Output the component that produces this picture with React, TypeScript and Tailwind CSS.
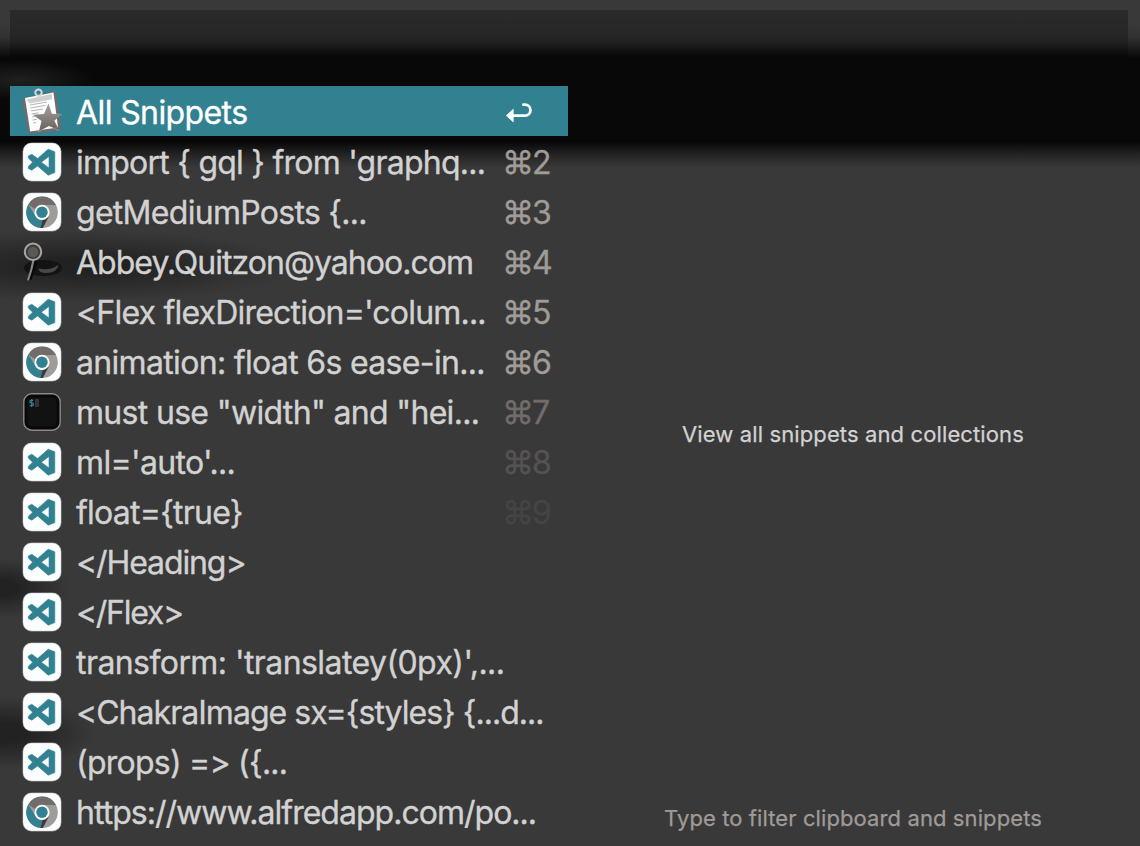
type Kind = "snippets" | "code" | "chrome" | "search" | "terminal";

type Row = { kind: Kind; text: string; cls: string; shortcut?: string; shortcutCls?: string };

const rows: Row[] = [
  { kind: "snippets", text: "All Snippets", cls: "tracking-[-0.6px] text-white" },
  { kind: "code", text: "import { gql } from 'graphq...", cls: "tracking-[-0.76px]", shortcut: "2", shortcutCls: "text-[#9f9b97]" },
  { kind: "chrome", text: "getMediumPosts {...", cls: "tracking-[-0.71px]", shortcut: "3", shortcutCls: "text-[#9f9b97]" },
  { kind: "search", text: "Abbey.Quitzon@yahoo.com", cls: "tracking-[-0.97px]", shortcut: "4", shortcutCls: "text-[#9f9b97]" },
  { kind: "code", text: "<Flex flexDirection='colum...", cls: "tracking-[-0.8px]", shortcut: "5", shortcutCls: "text-[#9f9b97]" },
  { kind: "chrome", text: "animation: float 6s ease-in...", cls: "tracking-[-0.67px]", shortcut: "6", shortcutCls: "text-[#9f9b97]" },
  { kind: "terminal", text: "must use \"width\" and \"hei...", cls: "tracking-[-0.68px]", shortcut: "7", shortcutCls: "text-[#716b69]" },
  { kind: "code", text: "ml='auto'...", cls: "tracking-[-0.65px]", shortcut: "8", shortcutCls: "text-[#555251]" },
  { kind: "code", text: "float={true}", cls: "tracking-[-0.75px]", shortcut: "9", shortcutCls: "text-[#454444]" },
  { kind: "code", text: "</Heading>", cls: "tracking-[-1.1px]" },
  { kind: "code", text: "</Flex>", cls: "tracking-[-1.3px]" },
  { kind: "code", text: "transform: 'translatey(0px)',...", cls: "tracking-[-0.57px]" },
  { kind: "code", text: "<ChakraImage sx={styles} {...d...", cls: "tracking-[-0.97px]" },
  { kind: "code", text: "(props) => ({...", cls: "tracking-[-0.76px]" },
  { kind: "chrome", text: "https://www.alfredapp.com/po...", cls: "tracking-[-0.98px]" },
];

function CodeIcon() {
  return (
    <svg viewBox="0 0 40 40" className="size-10">
      <rect x="1" y="1" width="38" height="38" rx="8.5" fill="#fbfeff" stroke="#d2d2d2" strokeWidth="0.6" />
      <path
        fillRule="evenodd"
        fill="#328190"
        stroke="#328190"
        strokeWidth="0.6"
        strokeLinejoin="round"
        d="M26.2 7.2 32.8 9.8v20.8L26.2 33.2 15.6 23.9 9.8 28.2 6.3 26.4v-2L10.6 20.2 6.3 16v-2L9.8 12.2l5.8 4.3ZM27 14.4 19.3 20.2l7.7 5.8Z"
      />
    </svg>
  );
}

function ChromeIcon() {
  return (
    <svg viewBox="0 0 40 40" className="size-10">
      <rect x="1" y="1" width="38" height="38" rx="8.5" fill="#fbfeff" stroke="#d2d2d2" strokeWidth="0.6" />
      <circle cx="20" cy="20.3" r="15.8" fill="#a09c99" />
      <path d="M6.3 12.4A15.8 15.8 0 0 1 34 13H20.3a7.4 7.4 0 0 0-6.8 4.6Z" fill="#726c6a" />
      <path d="M6.3 12.4A15.8 15.8 0 0 0 19 36L26.4 24.2a7.4 7.4 0 0 1-12.9-.3Z" fill="#328190" />
      <path d="m21 27.8-2.5 8.2 2.3.1 6-11.5Z" fill="#393939" />
      <circle cx="20" cy="20.3" r="7.6" fill="#fbfeff" />
      <circle cx="20" cy="20.3" r="5.7" fill="#328190" />
    </svg>
  );
}

function TerminalIcon() {
  return (
    <svg viewBox="0 0 40 40" className="size-10">
      <rect x="1.8" y="1.8" width="36.4" height="36.4" rx="8" fill="#080808" stroke="#8d8885" strokeWidth="1.4" />
      <rect x="5.5" y="5.5" width="29" height="29" rx="4" fill="#121212" />
      <path d="M11.3 8.3H9.2a1.2 1.2 0 0 0 0 2.7h1a1.3 1.3 0 0 1 0 2.7H7.8M9.7 7v8" stroke="#328190" strokeWidth="1.2" fill="none" />
      <rect x="13" y="7" width="4" height="8" fill="#353535" />
    </svg>
  );
}

function SearchIcon() {
  return (
    <svg viewBox="0 0 40 40" className="size-10">
      <ellipse cx="21" cy="26" rx="19" ry="8" fill="#131313" />
      <path d="M16.5 26.5q11 2.5 20-3.8-1 8-12.5 8.3-7.3 0-7.5-4.5Z" fill="#4a4847" />
      <path d="M13.5 19 10.5 28 7.5 37.5" stroke="#080808" strokeWidth="4" fill="none" />
      <path d="m11.5 18-2.3 10-3 9.5" stroke="#8c8784" strokeWidth="2.1" strokeLinecap="round" fill="none" />
      <circle cx="11" cy="9.8" r="8.2" fill="#3e3c3b" stroke="#a8a4a0" strokeWidth="2" />
      <circle cx="11" cy="10" r="5.2" fill="#5c5856" />
    </svg>
  );
}

function SnippetsIcon() {
  return (
    <svg viewBox="0 0 40 50" className="h-[50px] w-10">
      <path d="m1 12.5 30.5-7.3q2-.3 2.5 2L39 42q0 2-2 2.2L8.5 47.8q-2 0-2.4-2L.2 15Z" fill="#716b69" />
      <path d="m3 12 28.5-5.6L36 41.5 8.2 45.5Z" fill="#fbfeff" />
      <path d="M4.5 13.5 29.5 8l.8 5.2L7.5 17.5Z" fill="#cfcfcf" />
      <circle cx="16.5" cy="6.6" r="3.2" fill="none" stroke="#d7d7d7" strokeWidth="2" />
      <path
        d="m8 19 17-3M8.4 22l15-2.6M9 25l12-2M9.5 28l7-1.2M10 31l5-.8M10.5 34l4.5-.7M11 37l3-.5"
        stroke="#b7b5b3"
        strokeWidth="1"
      />
      <path d="m26.5 17.5 3 9.8 10.2.6-7.6 6.8 5 10.3-10.4-5-10.3 6.3 2.6-11.2-8.2-6 11.4-1Z" fill="#fbfeff" opacity="0.5" />
      <path d="m26.5 17.5 3.3 10.2 10 .6-7.5 6.5 5 9.7-10.3-4.6-10 5.4 2.5-10.4L11 28.8l11-.9Z" fill="url(#star)" />
      <defs>
        <linearGradient id="star" x2="0" y2="1">
          <stop stopColor="#a5a19e" />
          <stop offset="1" stopColor="#69625f" />
        </linearGradient>
      </defs>
    </svg>
  );
}

function ReturnIcon() {
  return (
    <svg viewBox="0 0 28 22" className="h-[22px] w-7" fill="none">
      <path d="M7 14.6h13a5.2 5.2 0 0 0 0-10.9h-1.6" stroke="#fbfeff" strokeWidth="2.8" strokeLinecap="round" />
      <path d="M1.3 14.6 8.2 8.4v12.4Z" fill="#fbfeff" stroke="#fbfeff" strokeWidth="0.8" strokeLinejoin="round" />
    </svg>
  );
}

const icons = {
  snippets: SnippetsIcon,
  code: CodeIcon,
  chrome: ChromeIcon,
  search: SearchIcon,
  terminal: TerminalIcon,
};

function ListRow({ row, selected }: { row: Row; selected: boolean }) {
  const Icon = icons[row.kind];
  return (
    <div className={`flex h-[50px] w-[558px] shrink-0 items-center pl-3 ${selected ? "bg-[#328190]" : ""}`}>
      <div className={`flex h-[50px] w-10 shrink-0 items-center ${selected ? "" : "pt-0.5"}`}>
        <Icon />
      </div>
      <span className={`ml-3.5 flex-1 whitespace-pre pt-1 text-[32px] leading-[46px] [font-variant-ligatures:none] [-webkit-text-stroke:0.35px] ${row.cls}`}>
        {row.text}
      </span>
      {selected && (
        <div className="mt-0.5 flex w-[63px]">
          <ReturnIcon />
        </div>
      )}
      {row.shortcut && (
        <span className={`w-[66px] whitespace-nowrap pt-1 text-[32px] leading-[46px] tracking-[-2px] [-webkit-text-stroke:0.35px] ${row.shortcutCls}`}>
          ⌘{row.shortcut}
        </span>
      )}
    </div>
  );
}

const backdrop =
  "bg-[radial-gradient(ellipse_75px_20px_at_20px_80px,#202020_0%,transparent_100%),radial-gradient(ellipse_220px_36px_at_80px_266px,#222222_20%,transparent_100%),radial-gradient(ellipse_70px_30px_at_0px_588px,#222222_25%,transparent_100%),radial-gradient(ellipse_90px_36px_at_5px_733px,#222222_25%,transparent_100%),linear-gradient(to_bottom,#393939_0px,#393939_25px,#303030_38px,#080808_58px,#080808_142px,#262626_156px,#393939_168px,#393939_846px)]";

export default function App() {
  return (
    <div className={`flex h-[846px] w-[1140px] flex-col overflow-hidden bg-[#393939] px-2.5 pt-2.5 font-['Inter',sans-serif] text-[#d2d2d2] ${backdrop}`}>
      <div className="h-[76px] w-[1118px] shrink-0 bg-[linear-gradient(to_bottom,#2b2b2b_0px,#262626_24px,#222222_31px,#080808_46px,transparent_50px)]" />
      <div className="flex flex-1">
        <div className="flex w-[558px] flex-col">
          {rows.map((row, i) => (
            <ListRow key={row.text} row={row} selected={i === 0} />
          ))}
        </div>
        <div className="flex flex-1 flex-col items-center pl-2 text-[22px] leading-8 [-webkit-text-stroke:0.25px]">
          <p className="mt-[332px] tracking-[0.12px]">View all snippets and collections</p>
          <p className="mt-[352px] tracking-[0.1px] text-[#9f9b97]">Type to filter clipboard and snippets</p>
        </div>
      </div>
    </div>
  );
}
